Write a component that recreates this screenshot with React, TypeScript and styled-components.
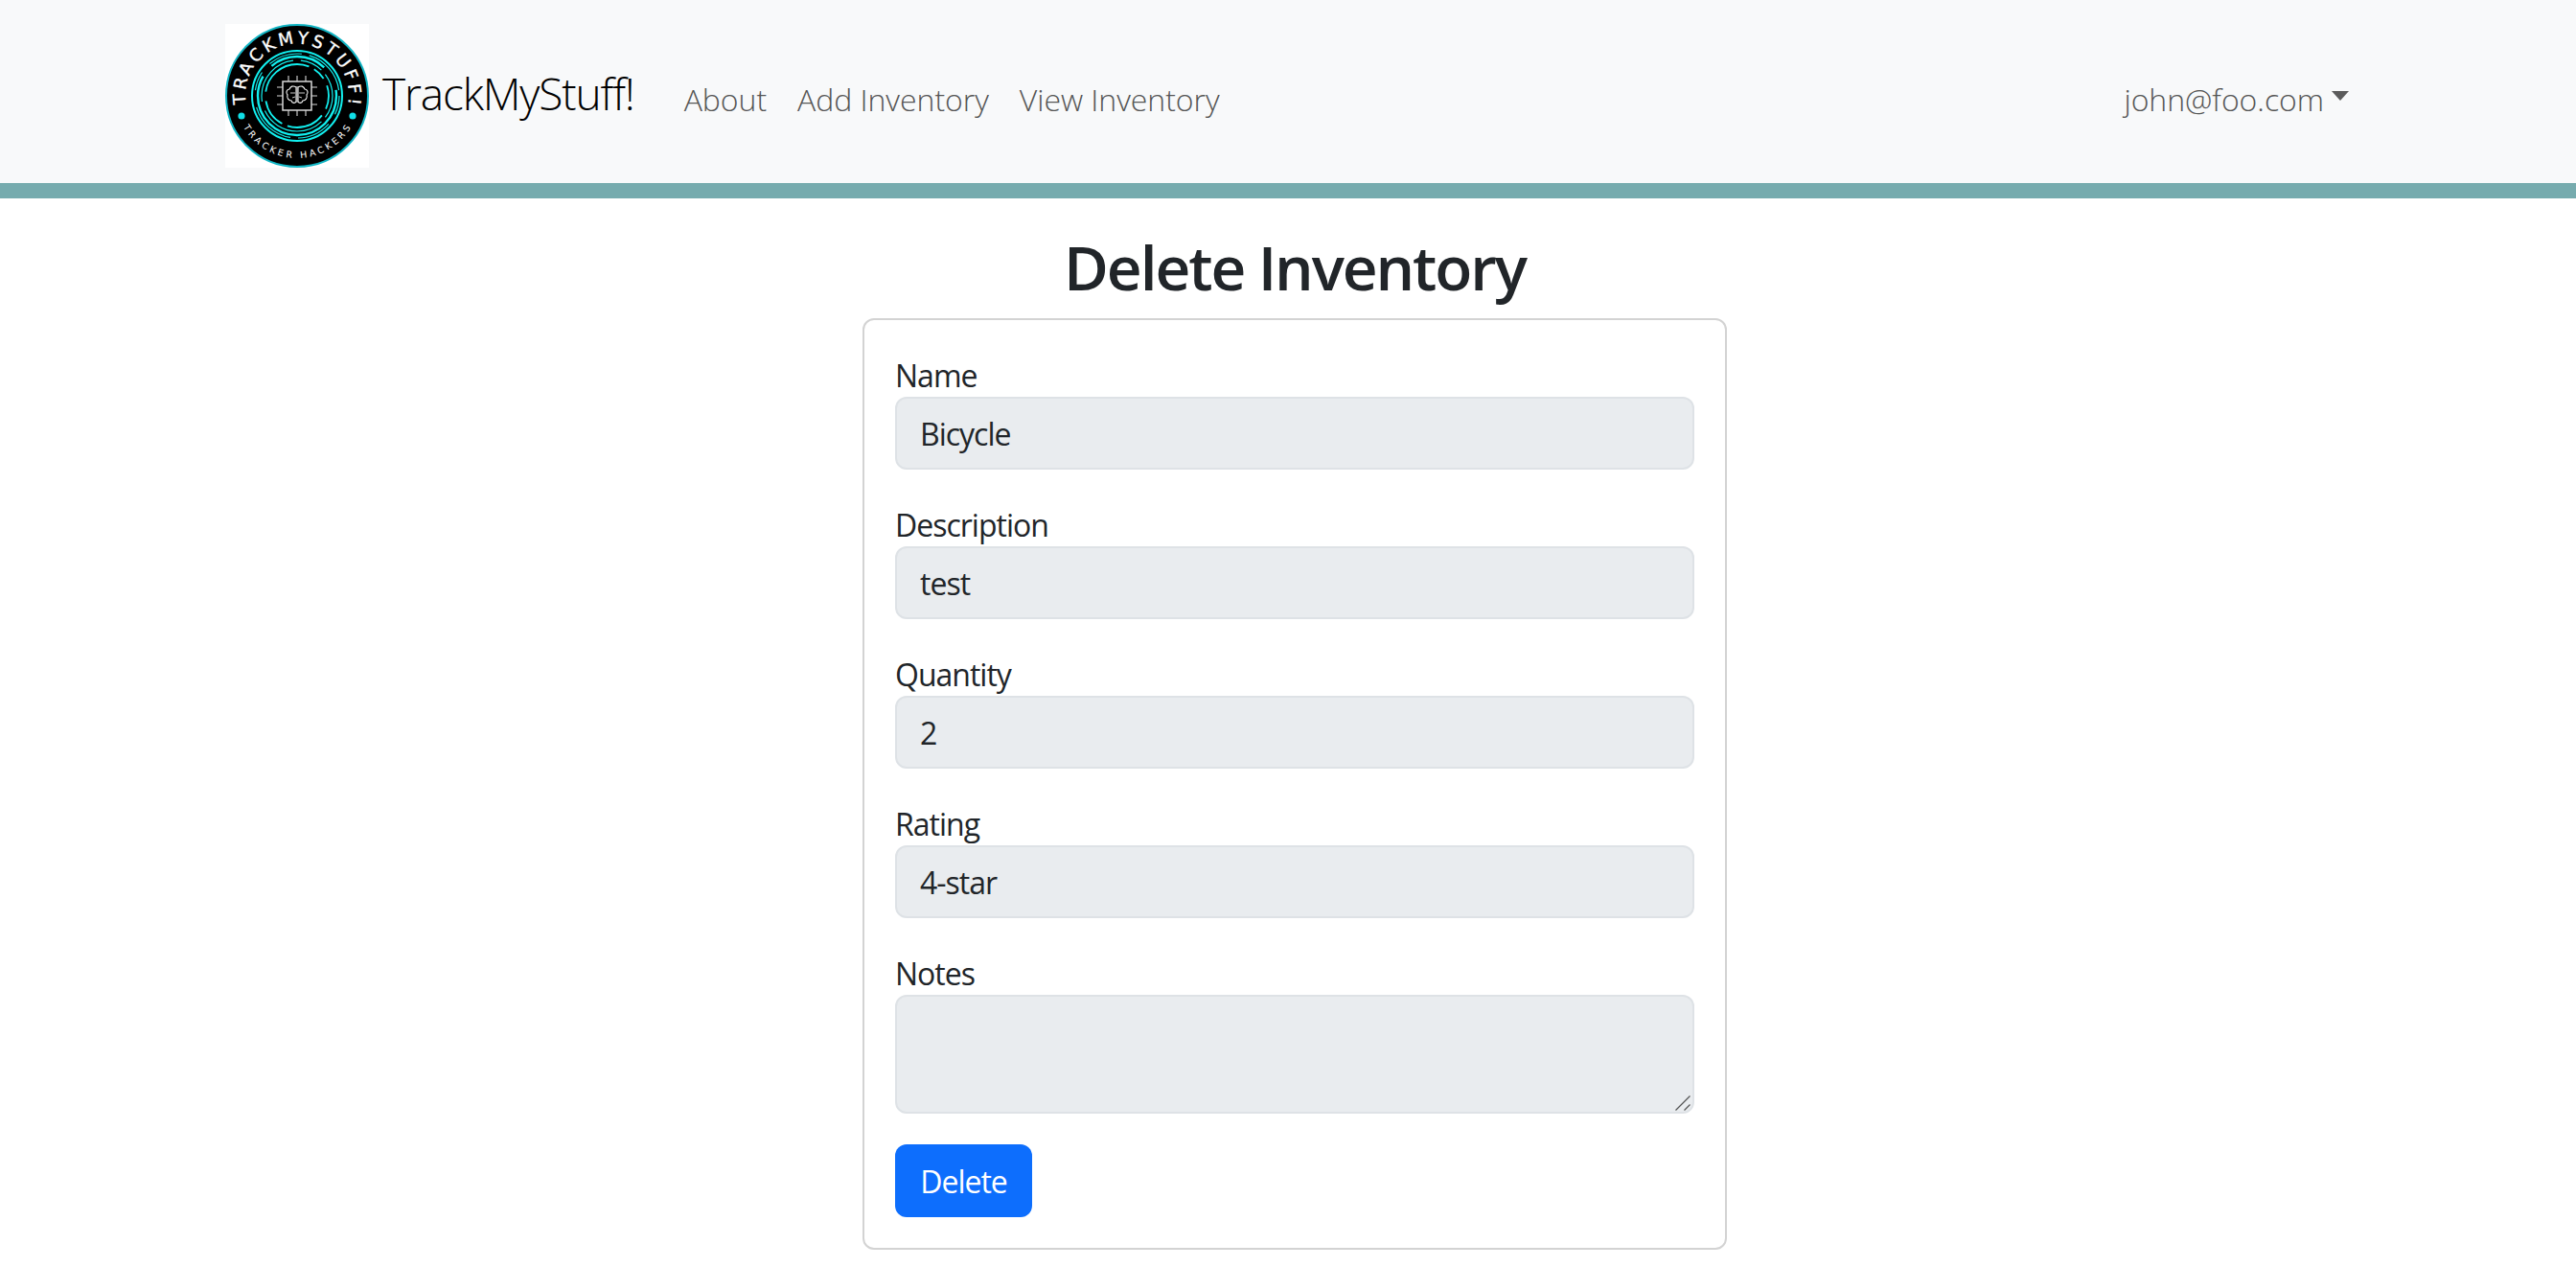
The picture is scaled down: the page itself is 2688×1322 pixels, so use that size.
import React from "react";
import styled, { createGlobalStyle } from "styled-components";

const Global = createGlobalStyle`
  html, body { margin: 0; padding: 0; background: #fff; }
  body { font-family: "Open Sans", "Noto Sans", sans-serif; color: #212529; font-size: 32px; }
  * { box-sizing: border-box; }
`;

const Header = styled.header`
  height: 207px;
  background: #f8f9fa;
  border-bottom: 16px solid #76abae;
  display: flex;
  align-items: flex-start;
  padding: 25px 237px 0 235px;
`;
const Brand = styled.a`
  display: flex;
  align-items: center;
  height: 150px;
  gap: 14px;
  color: #000;
  font-size: 46px;
  font-weight: 300;
  letter-spacing: -1.15px;
`;
const BrandName = styled.span`
  position: relative;
  top: -3px;
`;
const Nav = styled.nav`
  display: flex;
  align-items: center;
  height: 150px;
  margin-left: 52px;
  gap: 32px;
  flex: 1;
`;
const NavLink = styled.a<{ $right?: boolean }>`
  color: #555;
  font-size: 32px;
  font-weight: 300;
  letter-spacing: -0.05px;
  position: relative;
  top: 3px;
  display: inline-flex;
  align-items: center;
  margin-left: ${(p) => (p.$right ? "auto" : "0")};
`;
const Caret = styled.span`
  display: inline-block;
  margin-left: 8px;
  margin-top: -6px;
  border-top: 10px solid #5c5c5c;
  border-left: 9px solid transparent;
  border-right: 9px solid transparent;
`;
const Main = styled.main`
  display: flex;
  flex-direction: column;
  align-items: center;
  padding-left: 14px;
`;
const Title = styled.h2`
  margin: 33px 0 14px;
  font-size: 64px;
  line-height: 78px;
  font-weight: 600;
  letter-spacing: -2.1px;
  color: #212529;
`;
const Card = styled.form`
  width: 902px;
  height: 972px;
  border: 2px solid #d3d3d3;
  border-radius: 12px;
  padding: 32px;
  background: #fff;
  display: flex;
  flex-direction: column;
`;
const Field = styled.div`
  display: flex;
  flex-direction: column;
  margin-bottom: 32px;
`;
const Label = styled.label`
  font-size: 32px;
  line-height: 48px;
  height: 48px;
  padding-top: 2px;
  letter-spacing: -1px;
  font-weight: 400;
`;
const Input = styled.div`
  height: 76px;
  background: #e9ecef;
  border: 2px solid #dee2e6;
  border-radius: 12px;
  padding: 0 24px;
  display: flex;
  align-items: center;
  font-size: 32px;
  letter-spacing: -1px;
  color: #212529;
`;
const AreaWrap = styled.div`
  position: relative;
  height: 124px;
`;
const Area = styled.textarea`
  height: 124px;
  background: #e9ecef;
  border: 2px solid #dee2e6;
  border-radius: 12px;
  padding: 12px 24px;
  font: inherit;
  display: block;
  width: 100%;
  resize: none;
  outline: none;
`;
const Grip = styled.svg`
  position: absolute;
  right: 4px;
  bottom: 3px;
  width: 16px;
  height: 16px;
  pointer-events: none;
`;
const Button = styled.button`
  width: 143px;
  height: 76px;
  background: #0d6efd;
  color: #fff;
  border: 0;
  border-radius: 12px;
  font-family: inherit;
  font-size: 32px;
  letter-spacing: -1px;
  padding: 0;
`;

function Logo() {
  return (
    <svg width="150" height="150" viewBox="0 0 150 150" role="img" aria-label="TrackMyStuff logo">
      <rect width="150" height="150" fill="#fff" />
      <circle cx="75" cy="75" r="74" fill="#000" stroke="#12b5c4" strokeWidth="2" />
      <defs>
        <path id="topArc" d="M 21.7 83.4 A 54 54 0 1 1 128.3 83.4" />
        <path id="botArc" d="M 18.7 107.5 A 65 65 0 0 0 131.3 107.5" />
      </defs>
      <text fontFamily="'DejaVu Sans', sans-serif" fontWeight="400" fontSize="18" fill="#fff" stroke="#fff" strokeWidth="0.3">
        <textPath href="#topArc" textLength="186" lengthAdjust="spacing">TRACKMYSTUFF!</textPath>
      </text>
      <text fontFamily="'DejaVu Sans', sans-serif" fontWeight="400" fontSize="9.5" fill="#fff">
        <textPath href="#botArc" textLength="134" lengthAdjust="spacing">TRACKER HACKERS</textPath>
      </text>
      <circle cx="17" cy="96" r="3.6" fill="#10dfe6" />
      <circle cx="133" cy="96" r="3.6" fill="#10dfe6" />
      <g fill="none" stroke="#12f0f0">
        <circle cx="75" cy="75" r="47" strokeWidth="2" />
        <circle cx="75" cy="75" r="41" strokeWidth="2.4" strokeDasharray="150 14 60 27" />
        <circle cx="75" cy="75" r="37" strokeWidth="1.2" strokeDasharray="24 6 70 10 60 8" />
        <circle cx="75" cy="75" r="33" strokeWidth="1.8" strokeDasharray="14 8 40 6 30 10 60 6" />
        <circle cx="75" cy="75" r="44" strokeWidth="1.2" strokeDasharray="20 12 36 8 50 18" />
      </g>
      <g stroke="#d8d8d8" strokeWidth="1.1" fill="none">
        <rect x="60" y="60" width="30" height="30" strokeWidth="1.5" />
        <path d="M66 60v-6M75 60v-6M84 60v-6M66 90v6M75 90v6M84 90v6M60 66h-6M60 75h-6M60 84h-6M90 66h6M90 75h6M90 84h6" />
      </g>
      <g stroke="#f4f4f4" strokeWidth="1.1" fill="none">
        <path d="M74 66c-3-2-6-1-7 2-3 0-4 4-2 6-1 3 1 6 4 6 1 3 4 3 5 1z" />
        <path d="M76 66c3-2 6-1 7 2 3 0 4 4 2 6 1 3-1 6-4 6-1 3-4 3-5 1z" />
        <path d="M75 65v17M68 72h5M77 72h6M70 77l3-1M80 77l-3-1" strokeWidth="0.8" />
      </g>
    </svg>
  );
}

export default function App() {
  const fields = [
    ["Name", "Bicycle"],
    ["Description", "test"],
    ["Quantity", "2"],
    ["Rating", "4-star"],
  ];
  return (
    <>
      <Global />
      <Header>
        <Brand>
          <Logo />
          <BrandName>TrackMyStuff!</BrandName>
        </Brand>
        <Nav>
          <NavLink>About</NavLink>
          <NavLink>Add Inventory</NavLink>
          <NavLink>View Inventory</NavLink>
          <NavLink $right>
            john@foo.com
            <Caret />
          </NavLink>
        </Nav>
      </Header>
      <Main>
        <Title>Delete Inventory</Title>
        <Card>
          {fields.map(([label, value]) => (
            <Field key={label}>
              <Label>{label}</Label>
              <Input>{value}</Input>
            </Field>
          ))}
          <Field>
            <Label>Notes</Label>
            <AreaWrap>
              <Area readOnly />
              <Grip viewBox="0 0 16 16" aria-hidden="true">
                <path d="M0.5 15.5 L15.5 0.5 M9.5 15.5 L15.5 9.5" stroke="#555" strokeWidth="1.3" fill="none" />
              </Grip>
            </AreaWrap>
          </Field>
          <Button type="button">Delete</Button>
        </Card>
      </Main>
    </>
  );
}
